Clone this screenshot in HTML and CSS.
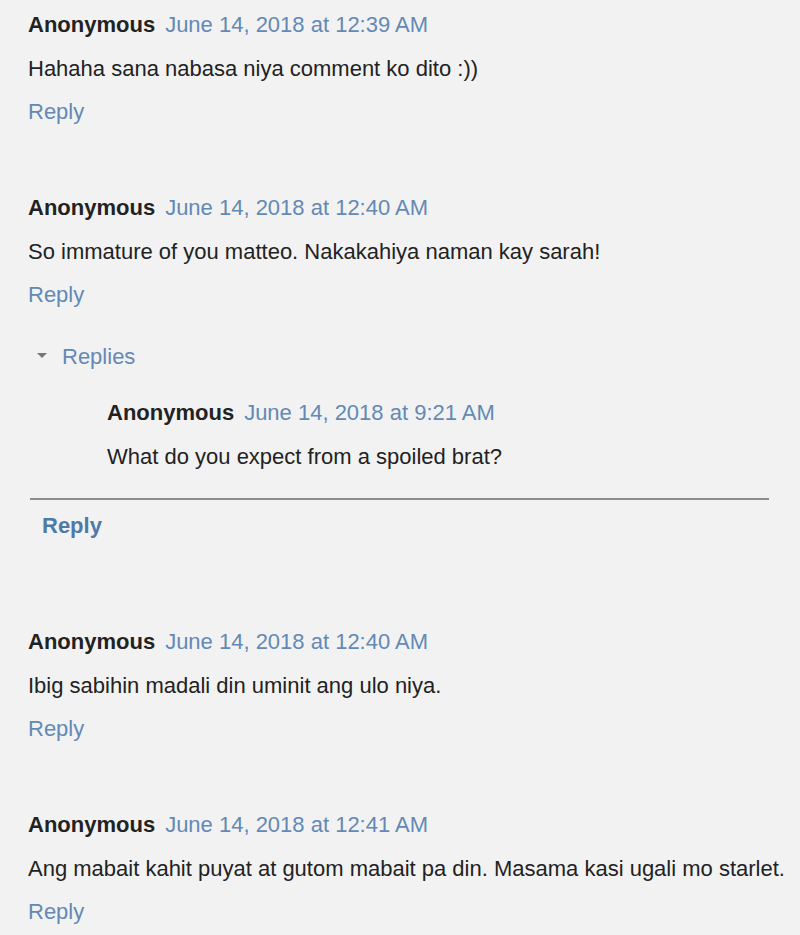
FILE: index.html
```html
<!DOCTYPE html>
<html lang="en">
<head>
  <meta charset="UTF-8">
  <meta name="viewport" content="width=device-width, initial-scale=1.0">
  <title>Comments</title>
  <link rel="stylesheet" href="styles.css">
</head>
<body>
  <!-- Comment list -->
  <div class="comments">
    <div class="comment">
      <div class="comment-header"><span class="author">Anonymous</span><a href="#" class="date">June 14, 2018 at 12:39 AM</a></div>
      <p class="comment-body">Hahaha sana nabasa niya comment ko dito :))</p>
      <a href="#" class="reply-link">Reply</a>
    </div>

    <div class="comment">
      <div class="comment-header"><span class="author">Anonymous</span><a href="#" class="date">June 14, 2018 at 12:40 AM</a></div>
      <p class="comment-body">So immature of you matteo. Nakakahiya naman kay sarah!</p>
      <a href="#" class="reply-link">Reply</a>

      <div class="thread">
        <div class="thread-toggle"><span class="arrow"></span><a href="#" class="toggle-link">Replies</a></div>
        <div class="comment nested">
          <div class="comment-header"><span class="author">Anonymous</span><a href="#" class="date">June 14, 2018 at 9:21 AM</a></div>
          <p class="comment-body">What do you expect from a spoiled brat?</p>
        </div>
        <div class="thread-footer">
          <a href="#" class="thread-reply">Reply</a>
        </div>
      </div>
    </div>

    <div class="comment">
      <div class="comment-header"><span class="author">Anonymous</span><a href="#" class="date">June 14, 2018 at 12:40 AM</a></div>
      <p class="comment-body">Ibig sabihin madali din uminit ang ulo niya.</p>
      <a href="#" class="reply-link">Reply</a>
    </div>

    <div class="comment">
      <div class="comment-header"><span class="author">Anonymous</span><a href="#" class="date">June 14, 2018 at 12:41 AM</a></div>
      <p class="comment-body">Ang mabait kahit puyat at gutom mabait pa din. Masama kasi ugali mo starlet.</p>
      <a href="#" class="reply-link">Reply</a>
    </div>
  </div>
</body>
</html>
```

FILE: styles.css
```css
/* General reset */
body, html {
  margin: 0;
  padding: 0;
  background: #f2f2f2;
  font-family: "Liberation Sans", Arial, sans-serif;
  font-size: 22px;
  color: #222;
}

a {
  text-decoration: none;
  color: #6389b4;
}

/* Comment list */
.comments {
  padding: 3px 0 0 28px;
}

.comment {
  margin-bottom: 53px;
}

.comment:last-child {
  margin-bottom: 0;
}

.comment-header {
  height: 44px;
  line-height: 44px;
  white-space: nowrap;
}

.author {
  font-weight: bold;
  color: #222;
}

.date {
  margin-left: 10px;
}

.comment-body {
  margin: 0;
  height: 44px;
  line-height: 44px;
  white-space: nowrap;
}

.reply-link {
  display: block;
  width: max-content;
  line-height: 42px;
}

/* Replies thread */
.thread {
  margin-top: 20px;
  margin-bottom: 73px;
}

.thread-toggle {
  display: flex;
  align-items: center;
  height: 42px;
  padding-left: 9px;
}

.arrow {
  width: 0;
  height: 0;
  border-left: 5px solid transparent;
  border-right: 5px solid transparent;
  border-top: 5px solid #777;
  margin-right: 15px;
  margin-top: -4px;
}

.comment.nested {
  margin: 13px 0 0 79px;
}

.thread-footer {
  margin-top: 19px;
  margin-left: 2px;
  width: 727px;
  border-top: 2px solid #8c8c8c;
  padding: 5px 0 0 12px;
}

.thread-reply {
  display: block;
  width: max-content;
  line-height: 42px;
  font-weight: bold;
  color: #4f7aa8;
}
```
